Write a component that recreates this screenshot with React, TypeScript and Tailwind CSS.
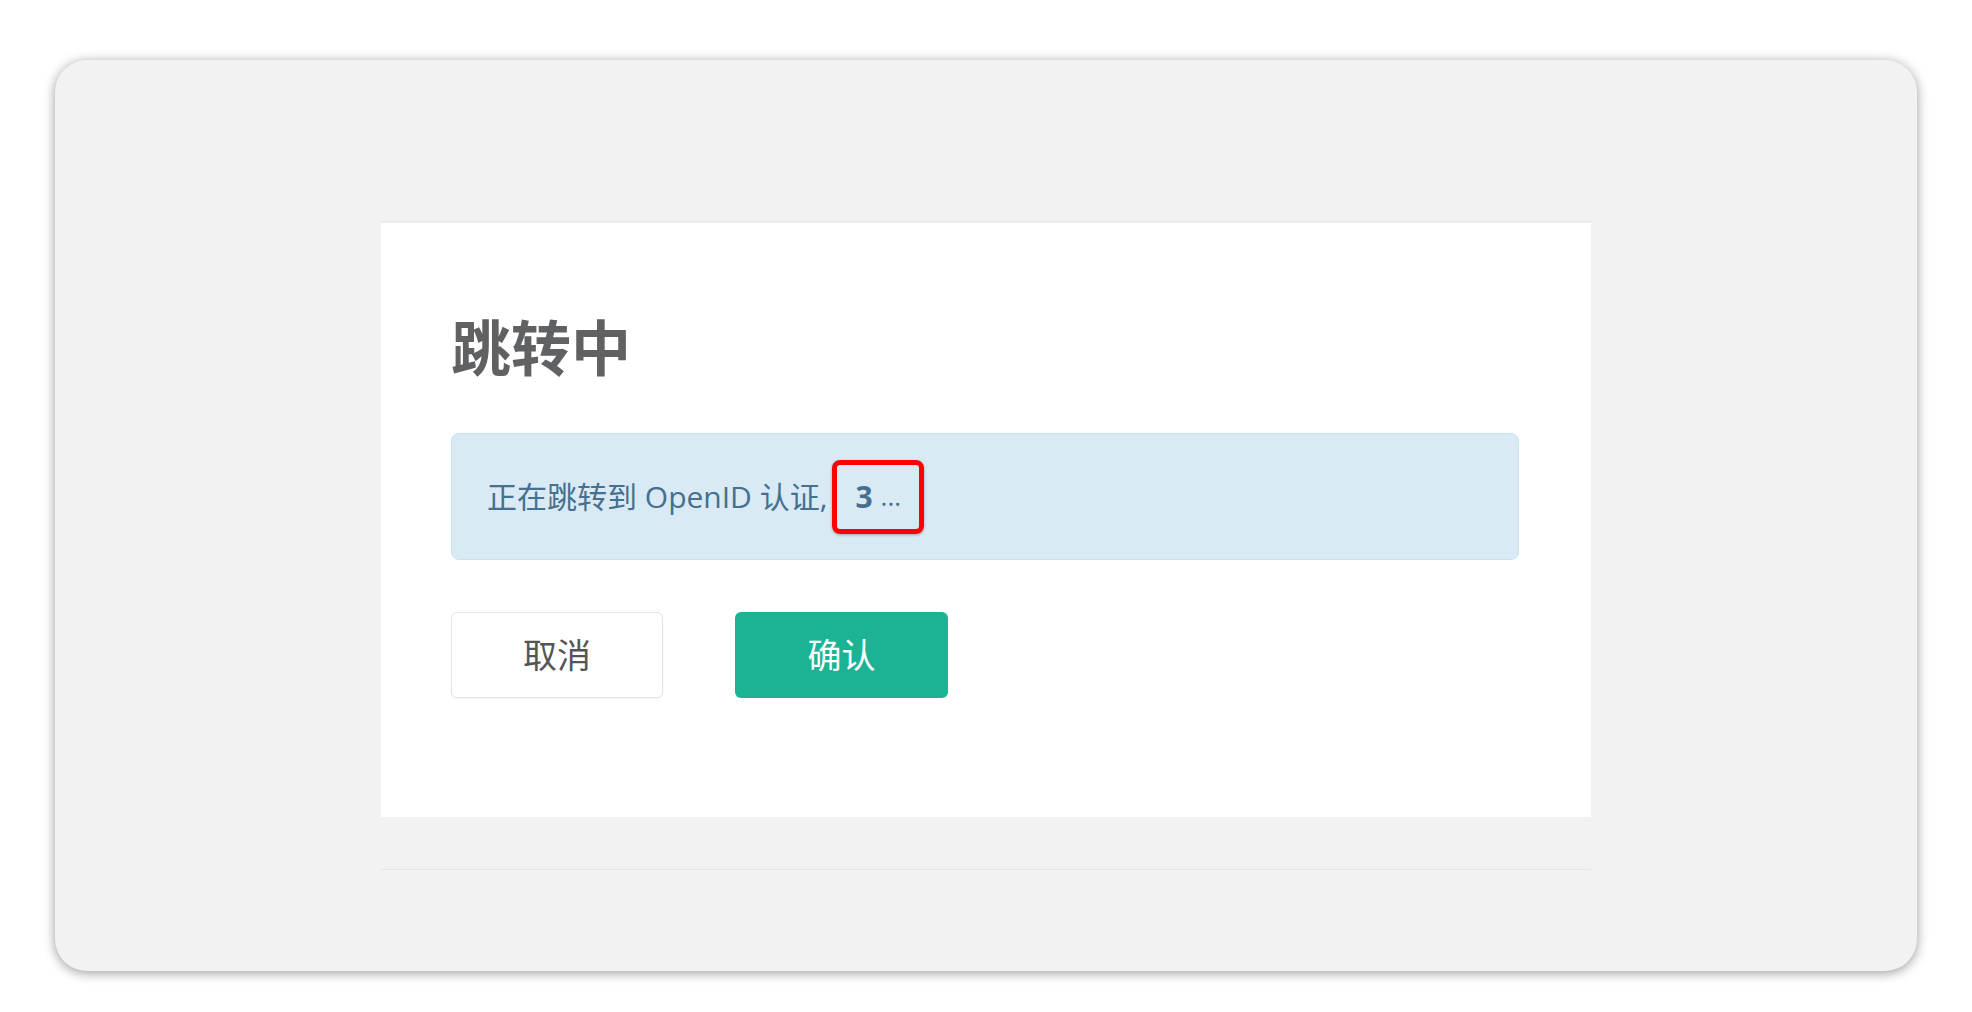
export default function App() {
  const seconds = 3;

  return (
    <div
      className="min-h-screen bg-white px-[55px] pt-[60px] pb-[41px]"
      style={{ fontFamily: '"Open Sans", "Noto Sans CJK SC", sans-serif' }}
    >
      {/* Window frame */}
      <div className="h-[911px] rounded-[32px] bg-[#f2f2f3] shadow-[0_2px_12px_rgba(0,0,0,0.4)] pt-[161px]">
        {/* Dialog card */}
        <div className="mx-auto w-[1210px] h-[596px] bg-white border-t-2 border-[#ebebeb] pl-[70px] pr-[72px] pt-[95px]">
          <h1 className="text-[60px] leading-none font-bold text-[#5f6163]">跳转中</h1>

          <div className="mt-[55px] h-[127px] rounded-lg border border-[#c3e3ee] bg-[#d9eaf5] flex items-center pl-[35px] text-[30px] text-[#46708f]">
            <span>正在跳转到 OpenID 认证,</span>
            <span className="ml-[5px] inline-flex items-center h-[74px] px-[18px] rounded-lg border-[5px] border-[#ff0000] shadow-[0_1px_3px_rgba(0,0,0,0.3)]">
              <span className="font-bold">{seconds}</span>
              <span className="ml-[8px] text-[26px]">...</span>
            </span>
          </div>

          <div className="mt-[52px] flex gap-[72px]">
            <button
              type="button"
              className="w-[212px] h-[86px] rounded-md bg-white border border-[#e4e4e4] shadow-[0_1px_2px_rgba(0,0,0,0.06)] text-[34px] text-[#555]"
            >
              取消
            </button>
            <button
              type="button"
              className="w-[213px] h-[86px] rounded-md bg-[#1cb394] text-[34px] text-white"
            >
              确认
            </button>
          </div>
        </div>

        {/* Footer divider */}
        <div className="mx-auto mt-[52px] w-[1210px] border-t border-[#e6e6e8]" />
      </div>
    </div>
  );
}
